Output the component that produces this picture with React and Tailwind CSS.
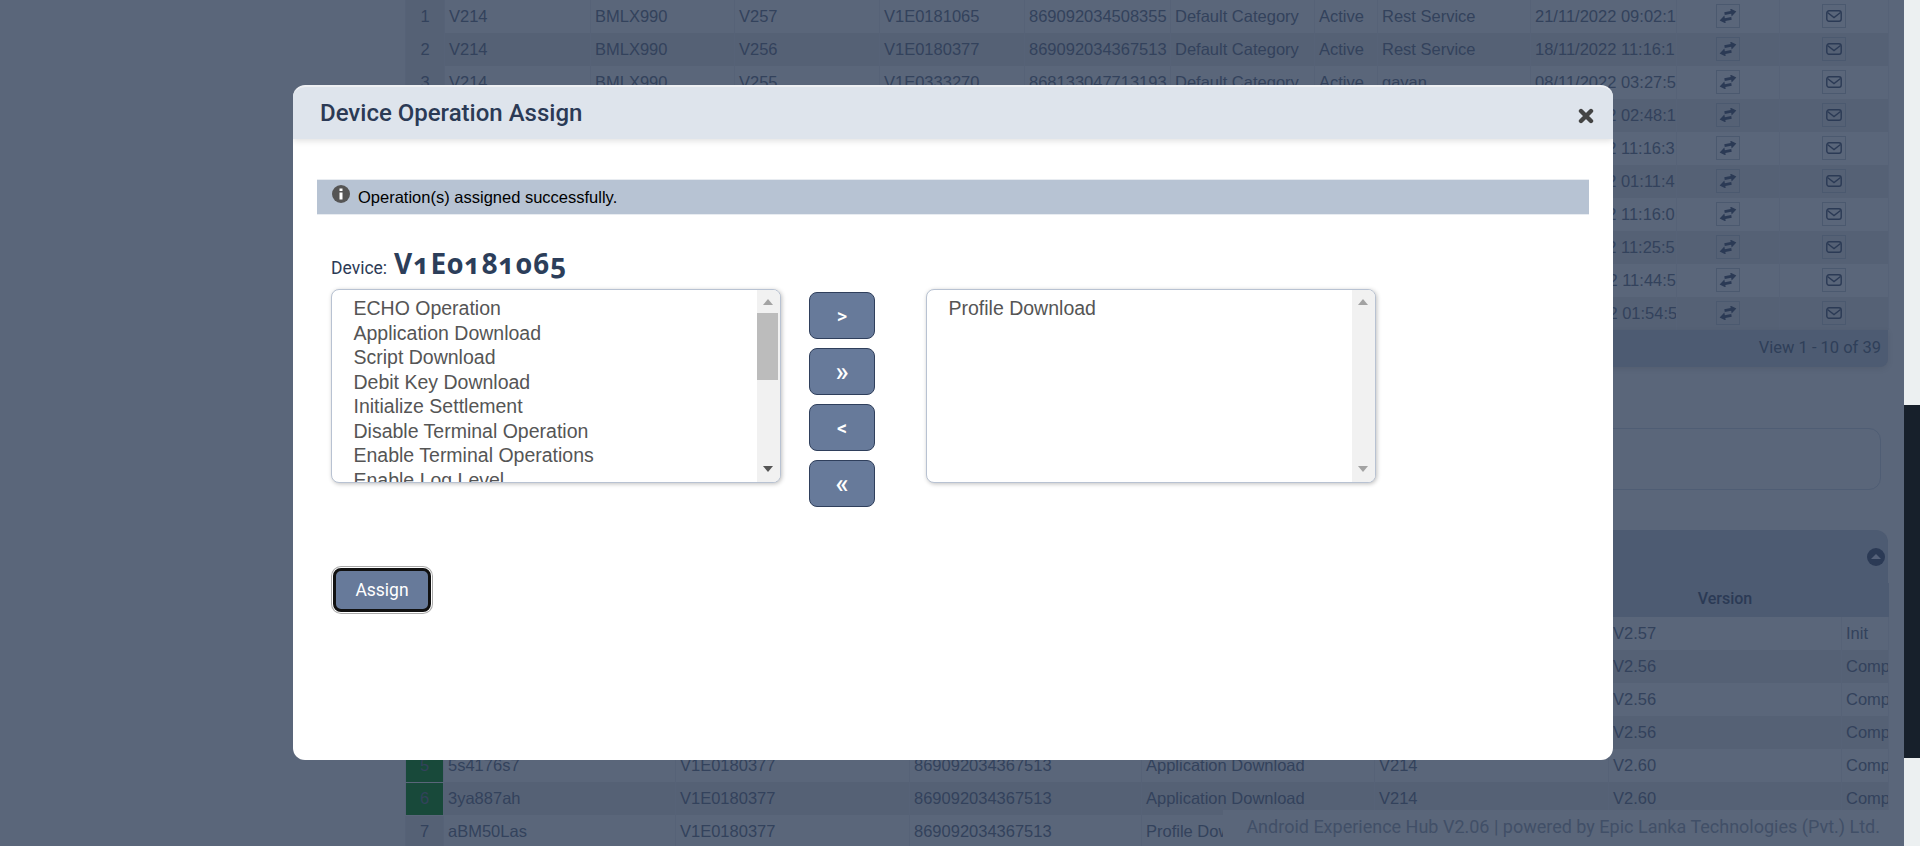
import React from 'react';

const deviceRows = [
  ['1', 'V214', 'BMLX990', 'V257', 'V1E0181065', '869092034508355', 'Default Category', 'Active', 'Rest Service', '21/11/2022 09:02:1'],
  ['2', 'V214', 'BMLX990', 'V256', 'V1E0180377', '869092034367513', 'Default Category', 'Active', 'Rest Service', '18/11/2022 11:16:1'],
  ['3', 'V214', 'BMLX990', 'V255', 'V1E0333270', '868133047713193', 'Default Category', 'Active', 'gayan', '08/11/2022 03:27:5'],
  ['4', 'V214', 'BMLX990', 'V254', 'V1E0180377', '869092034367513', 'Default Category', 'Active', 'Rest Service', '07/11/2022 02:48:1'],
  ['5', 'V214', 'BMLX990', 'V253', 'V1E0180377', '869092034367513', 'Default Category', 'Active', 'Rest Service', '04/11/2022 11:16:3'],
  ['6', 'V214', 'BMLX990', 'V252', 'V1E0180377', '869092034367513', 'Default Category', 'Active', 'Rest Service', '03/11/2022 01:11:4'],
  ['7', 'V214', 'BMLX990', 'V251', 'V1E0180377', '869092034367513', 'Default Category', 'Active', 'Rest Service', '02/11/2022 11:16:0'],
  ['8', 'V214', 'BMLX990', 'V250', 'V1E0180377', '869092034367513', 'Default Category', 'Active', 'Rest Service', '01/11/2022 11:25:5'],
  ['9', 'V214', 'BMLX990', 'V249', 'V1E0180377', '869092034367513', 'Default Category', 'Active', 'Rest Service', '31/10/2022 11:44:5'],
  ['10', 'V214', 'BMLX990', 'V248', 'V1E0180377', '869092034367513', 'Default Category', 'Active', 'Rest Service', '28/10/2022 01:54:5'],
];

const historyRows = [
  ['1', 'aT84Ks21', 'V1E0181065', '869092034508355', 'Profile Download', 'V214', 'V2.57', 'Init'],
  ['2', 'p7Qm20xd', 'V1E0180377', '869092034367513', 'Application Download', 'V214', 'V2.56', 'Comp'],
  ['3', 'r9Lw31ce', 'V1E0180377', '869092034367513', 'Application Download', 'V214', 'V2.56', 'Comp'],
  ['4', 'k2Fz58ub', 'V1E0180377', '869092034367513', 'Application Download', 'V214', 'V2.56', 'Comp'],
  ['5', '5s4176s7', 'V1E0180377', '869092034367513', 'Application Download', 'V214', 'V2.60', 'Comp'],
  ['6', '3ya887ah', 'V1E0180377', '869092034367513', 'Application Download', 'V214', 'V2.60', 'Comp'],
  ['7', 'aBM50Las', 'V1E0180377', '869092034367513', 'Profile Download', 'V214', 'V2.60', 'Comp'],
];

const operations = [
  'ECHO Operation',
  'Application Download',
  'Script Download',
  'Debit Key Download',
  'Initialize Settlement',
  'Disable Terminal Operation',
  'Enable Terminal Operations',
  'Enable Log Level',
];

const ExchangeIcon = () => (
  <svg width="18" height="14" viewBox="0 0 18 14" fill="#2b3a55">
    <g transform="rotate(-10 9 7)">
      <path d="M6 2.6h6.5V0L18 4l-5.5 4V5.4H6z" />
      <path d="M12 8.6H5.5V6L0 10l5.5 4v-2.6H12z" />
    </g>
  </svg>
);

const EnvelopeIcon = () => (
  <svg width="16" height="12" viewBox="0 0 16 12" fill="none" stroke="#2b3a55" strokeWidth="1.4">
    <rect x="0.8" y="0.8" width="14.4" height="10.4" rx="2.2" />
    <path d="M1.5 2.5L8 7.5l6.5-5" />
  </svg>
);

const IconBox = ({ children }) => (
  <span className="mx-auto mb-[1px] flex h-[24px] w-[24px] items-center justify-center border border-[#4b596f]">
    {children}
  </span>
);

const DeviceTable = () => (
  <table className="w-[1483px] table-fixed border-collapse font-['Liberation_Sans',sans-serif] text-[16.5px] text-[#33425c]">
    <colgroup>
      <col className="w-[39px]" />
      <col className="w-[146px]" />
      <col className="w-[144px]" />
      <col className="w-[145px]" />
      <col className="w-[145px]" />
      <col className="w-[146px]" />
      <col className="w-[144px]" />
      <col className="w-[63px]" />
      <col className="w-[153px]" />
      <col className="w-[146px]" />
      <col className="w-[103px]" />
      <col className="w-[109px]" />
    </colgroup>
    <tbody>
      {deviceRows.map((row, i) => (
        <tr key={row[0]} className={`h-[33px] ${i % 2 === 0 ? 'bg-[#5a667a]' : 'bg-[#556175]'}`}>
          {row.map((cell, j) => (
            <td
              key={j}
              className={`overflow-hidden border-x border-[#566277] px-[4px] whitespace-nowrap ${j === 0 ? 'bg-[#556175] text-center' : ''}`}
            >
              {cell}
            </td>
          ))}
          <td className="border-x border-[#566277]">
            <IconBox><ExchangeIcon /></IconBox>
          </td>
          <td className="border-x border-[#566277]">
            <IconBox><EnvelopeIcon /></IconBox>
          </td>
        </tr>
      ))}
    </tbody>
  </table>
);

const HistoryTable = () => (
  <table className="w-[1483px] table-fixed border-collapse font-['Liberation_Sans',sans-serif] text-[16.5px] text-[#33425c]">
    <colgroup>
      <col className="w-[38px]" />
      <col className="w-[232px]" />
      <col className="w-[234px]" />
      <col className="w-[232px]" />
      <col className="w-[233px]" />
      <col className="w-[234px]" />
      <col className="w-[233px]" />
      <col className="w-[47px]" />
    </colgroup>
    <thead>
      <tr className="h-[34px] bg-[#4d5b72] font-['Roboto',sans-serif] text-[16px] text-[#2b3a55]">
        <th className="font-medium" />
        <th className="font-medium" />
        <th className="font-medium" />
        <th className="font-medium" />
        <th className="font-medium" />
        <th className="font-medium" />
        <th className="pb-[2px] font-medium">Version</th>
        <th className="font-medium" />
      </tr>
    </thead>
    <tbody>
      {historyRows.map((row, i) => (
        <tr key={row[0]} className={`h-[33px] ${i % 2 === 0 ? 'bg-[#5a667a]' : 'bg-[#556175]'}`}>
          {row.map((cell, j) => (
            <td
              key={j}
              className={`overflow-hidden border-x border-[#566277] px-[4px] whitespace-nowrap ${
                j === 0 ? (i === 4 || i === 5 ? 'border-b border-b-[#5a667a] bg-[#18493a] text-center' : 'bg-[#556175] text-center') : ''
              }`}
            >
              {cell}
            </td>
          ))}
        </tr>
      ))}
    </tbody>
  </table>
);

const ListBox = ({ items, width, thumb }) => (
  <div className={`flex h-[194px] ${width} overflow-hidden rounded-lg border border-[#b8c2d2] bg-white shadow-[1px_1px_4px_rgba(0,0,0,0.25)]`}>
    <div className="flex-1 overflow-hidden px-[21.5px] pt-[6px] font-['Liberation_Sans',sans-serif] text-[19.5px] leading-[24.5px] text-[#555]">
      {items.map((item) => (
        <div key={item} className="whitespace-nowrap">{item}</div>
      ))}
    </div>
    <div className="flex w-[23px] flex-col items-center bg-[#f1f1f1] pr-[2px]">
      <span className="mt-[9px] h-0 w-0 border-x-[5px] border-b-[6px] border-x-transparent border-b-[#a3a3a3]" />
      {thumb ? <div className="mt-[8px] h-[67px] w-[21px] bg-[#bcbcbc]" /> : null}
      <span
        className={`mt-auto mb-[10px] h-0 w-0 border-x-[5px] border-t-[6px] border-x-transparent ${thumb ? 'border-t-[#555]' : 'border-t-[#a3a3a3]'}`}
      />
    </div>
  </div>
);

const MoveButton = ({ label, big }) => (
  <button
    className={`h-[47px] w-[66px] rounded-lg border border-[#2f3f5c] bg-[#677a9a] font-['Roboto',sans-serif] font-medium text-white ${big ? 'text-[27px] leading-[20px]' : 'text-[20px]'}`}
  >
    {label}
  </button>
);

const OperationModal = () => (
  <div className="absolute top-[85px] left-[293px] h-[675px] w-[1320px] overflow-hidden rounded-xl border-t-2 border-[#eef0f3] bg-white">
    <div className="flex h-[52px] items-center justify-between bg-[#dee4ec] pr-[19px] pl-[27px] shadow-[0_2px_6px_rgba(0,0,0,0.12)]">
      <h4 className="font-['Roboto',sans-serif] text-[24px] font-medium text-[#2b3a55]">Device Operation Assign</h4>
      <svg className="mt-[5px]" width="16" height="16" viewBox="0 0 16 16" fill="none" stroke="#444" strokeWidth="4.4" strokeLinecap="round">
        <path d="M3 3l10 10M13 3L3 13" />
      </svg>
    </div>

    <div className="px-[24px] pt-[40px]">
      <div className="flex h-[36px] items-center gap-[8px] border-y border-[#e8ecf1] bg-[#b7c3d3] pl-[15px] font-['Liberation_Sans',sans-serif] text-[16.5px] text-black">
        <svg className="mb-[6px]" width="18" height="18" viewBox="0 0 18 18">
          <circle cx="9" cy="9" r="9" fill="#555" />
          <rect x="7.5" y="7.5" width="3" height="7" fill="#fff" />
          <rect x="7.5" y="3.5" width="3" height="2.5" fill="#fff" />
        </svg>
        Operation(s) assigned successfully.
      </div>

      <div className="mt-[30px] flex items-baseline gap-[7px] pl-[14px]">
        <span className="font-['Roboto',sans-serif] text-[17.5px] text-[#2b3a55]">Device:</span>
        <span className="font-['Open_Sans',sans-serif] text-[28px] leading-[36px] font-bold tracking-[1px] text-[#2c3e5a] oldstyle-nums">V1E0181065</span>
      </div>

      <div className="mt-[8px] flex items-start pl-[14px]">
        <ListBox items={operations} width="w-[450px]" thumb />
        <div className="mt-[3px] ml-[28px] flex flex-col gap-[9px]">
          <MoveButton label=">" />
          <MoveButton label="»" big />
          <MoveButton label="<" />
          <MoveButton label="«" big />
        </div>
        <div className="ml-[51px]">
          <ListBox items={['Profile Download']} width="w-[450px]" />
        </div>
      </div>

      <button className="mt-[61px] ml-[16px] block h-[44px] w-[98px] rounded-lg border-[3px] border-[#111] bg-[#677a9a] font-['Roboto',sans-serif] text-[17.5px] text-white shadow-[0_0_0_1px_#fff,0_0_0_2px_#aaa]">
        Assign
      </button>
    </div>
  </div>
);

export default function App() {
  return (
    <div className="relative flex h-[846px] w-[1920px] overflow-hidden bg-[#5a667a]">
      <div className="w-[405px] shrink-0" />

      <main className="w-[1499px] shrink-0">
        <DeviceTable />
        <div className="flex h-[37px] w-[1483px] items-center justify-end rounded-b-lg bg-[#4d5b72] pr-[7px] font-['Roboto',sans-serif] text-[16.5px] text-[#2f3f59] shadow-[0_2px_6px_rgba(0,0,0,0.08)]">
          View 1 - 10 of 39
        </div>
        <div className="mt-[61px] h-[62px] w-[1476px] rounded-xl border border-[#4f5d74]" />
        <div className="mt-[40px] flex h-[53px] w-[1483px] items-center justify-end rounded-t-xl bg-[#4d5b72] pr-[3px]">
          <svg width="18" height="18" viewBox="0 0 18 18">
            <circle cx="9" cy="9" r="9" fill="#2b3a55" />
            <path d="M4 11l5-5 5 5z" fill="#56627a" />
          </svg>
        </div>
        <HistoryTable />
      </main>

      {/* right strip of the page behind the overlay */}
      <div className="flex w-[16px] shrink-0 flex-col bg-[#ecf0f1]">
        <div className="mt-[405px] h-[353px] bg-[#17202b]" />
      </div>

      <div className="absolute top-[810px] right-[16px] flex h-[36px] w-[681px] items-center justify-end bg-[#5a667a] pr-[24px] pb-[3px] font-['Roboto',sans-serif] text-[18px] text-[#414f67]">
        Android Experience Hub V2.06 | powered by Epic Lanka Technologies (Pvt.) Ltd.
      </div>

      <OperationModal />
    </div>
  );
}
